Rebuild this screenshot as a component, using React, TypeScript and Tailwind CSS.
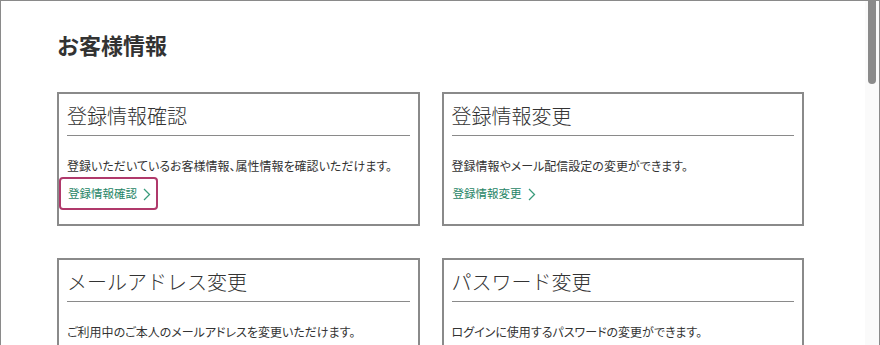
import React from 'react';

interface MenuCard {
  title: string;
  description: string;
  link?: string;
  focused?: boolean;
}

const cards: MenuCard[] = [
  {
    title: '登録情報確認',
    description: '登録いただいているお客様情報、属性情報を確認いただけます。',
    link: '登録情報確認',
    focused: true,
  },
  {
    title: '登録情報変更',
    description: '登録情報やメール配信設定の変更ができます。',
    link: '登録情報変更',
  },
  {
    title: 'メールアドレス変更',
    description: 'ご利用中のご本人のメールアドレスを変更いただけます。',
    link: 'メールアドレス変更',
  },
  {
    title: 'パスワード変更',
    description: 'ログインに使用するパスワードの変更ができます。',
    link: 'パスワード変更',
  },
];

const Chevron: React.FC = () => (
  <svg width="8" height="13" viewBox="0 0 8 13" fill="none" className="ml-[6px] mt-[2px]">
    <path d="M1 1l5.5 5.5L1 12" stroke="#3a9c7c" strokeWidth="1.3" />
  </svg>
);

const Card: React.FC<{ card: MenuCard }> = ({ card }) => (
  <div className="border-2 border-[#8a8a8a] bg-white px-[8px] pt-[7px] pb-[14px]">
    <h3 className="border-b border-[#8a8a8a] pb-[4px] text-[20px] font-light leading-[30px] text-[#333]">
      {card.title}
    </h3>
    <p className="mt-[21px] whitespace-nowrap text-[12px] leading-[18px] text-[#333] [font-feature-settings:'palt']">
      {card.description}
    </p>
    <a
      href="#"
      className={`-ml-[8px] mt-[2px] inline-flex items-center rounded-[4px] border-2 pl-[7px] pr-[5px] py-[5px] text-[11.5px] leading-[19px] text-[#1f8566] [font-feature-settings:'palt'] ${
        card.focused ? 'border-[#b0396b]' : 'border-transparent'
      }`}
    >
      {card.link}
      <Chevron />
    </a>
  </div>
);

export default function App() {
  return (
    <div
      className="flex h-[345px] w-[880px] overflow-hidden border border-b-0 border-[#8a8a8a] bg-white"
      style={{ fontFamily: '"Noto Sans CJK JP", "Noto Sans", sans-serif' }}
    >
      <div className="flex-1 pl-[56px] pr-[60px]">
        <h1 className="mt-[28px] text-[22px] font-bold leading-[30px] text-[#333]">お客様情報</h1>
        <div className="mt-[33px] grid w-[747px] grid-cols-2 gap-x-[22px] gap-y-[32px]">
          {cards.map((card) => (
            <Card key={card.title} card={card} />
          ))}
        </div>
      </div>
      <div className="relative w-[14px] shrink-0 bg-[#fafafa]">
        <div className="ml-[3px] h-[83px] w-[8px] rounded-b-[4px] bg-[#8a8a8a]" />
      </div>
    </div>
  );
}
